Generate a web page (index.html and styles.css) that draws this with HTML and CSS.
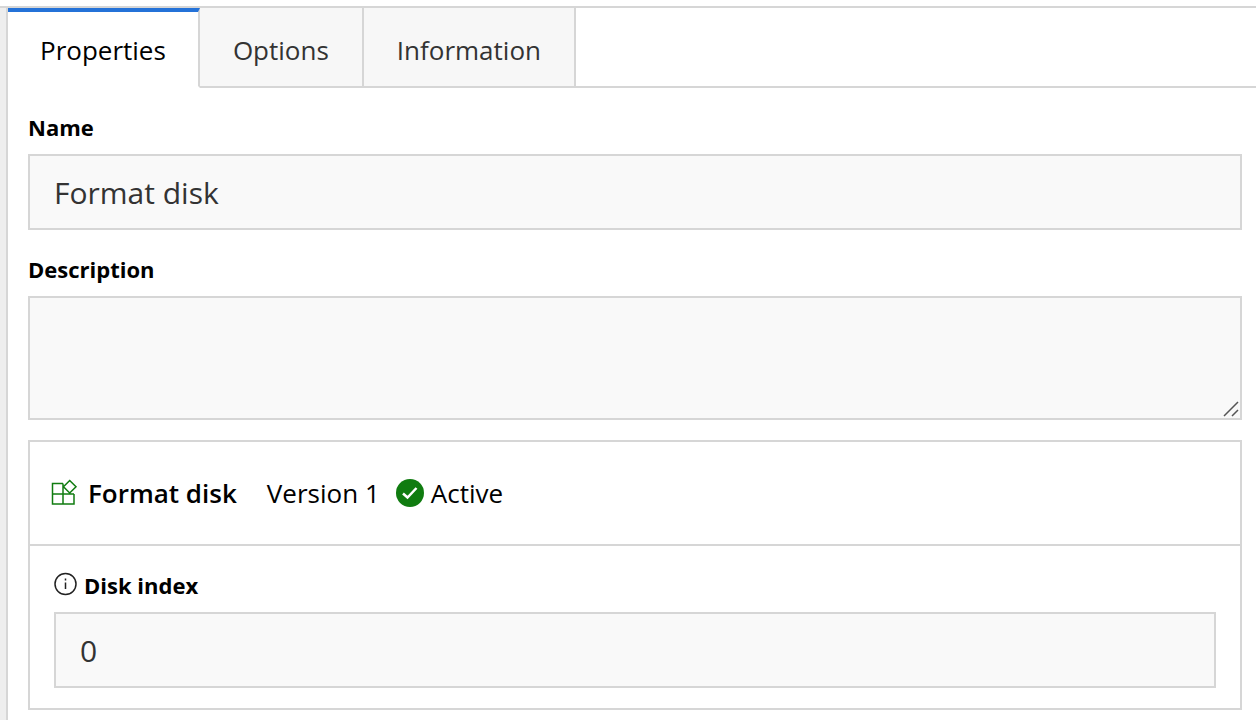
FILE: index.html
```
<!DOCTYPE html>
<html lang="en">
<head>
    <meta charset="UTF-8">
    <meta name="viewport" content="width=device-width, initial-scale=1.0">
    <title>Format disk</title>
    <link rel="stylesheet" href="styles.css">
</head>
<body>
    <main class="panel">
        <div class="tabs" role="tablist">
            <button class="tab active" type="button" role="tab" aria-selected="true">Properties</button>
            <button class="tab" type="button" role="tab" aria-selected="false">Options</button>
            <button class="tab" type="button" role="tab" aria-selected="false">Information</button>
        </div>

        <form class="content">
            <label class="label" for="name">Name</label>
            <input class="field" id="name" type="text" value="Format disk">

            <label class="label" for="description">Description</label>
            <div class="textarea-wrap">
                <textarea class="field area" id="description"></textarea>
                <svg class="grip" viewBox="0 0 16 16">
                    <path d="M1 15L15 1M9 15L15 9"/>
                </svg>
            </div>

            <section class="card">
                <div class="card-header">
                    <svg class="icon-blocks" viewBox="0 0 28 28">
                        <path d="M13 4.5H2.5V25H24V15M2.5 15H24M13 4.500V25M19.700 1.500L26 7.800L19.700 14L13.500 7.800Z"/>
                    </svg>
                    <span class="card-title">Format disk</span>
                    <span class="version">Version 1</span>
                    <svg class="icon-check" viewBox="0 0 28 28">
                        <circle cx="14" cy="14" r="14"/>
                        <path d="M7 14.500L11.500 18.500L20.500 9"/>
                    </svg>
                    <span>Active</span>
                </div>
                <div class="card-body">
                    <label class="label" for="disk-index">
                        <svg class="icon-info" viewBox="0 0 24 24">
                            <circle cx="11.500" cy="11" r="10.500"/>
                            <path d="M11.500 9.500V16M11.500 5.500V7.500"/>
                        </svg>
                        Disk index
                    </label>
                    <input class="field" id="disk-index" type="text" value="0">
                </div>
            </section>
        </form>
    </main>
</body>
</html>
```

FILE: styles.css
```
* {
    box-sizing: border-box;
}

body {
    margin: 0;
    padding-top: 6px;
    min-height: 100vh;
    display: flex;
    background: #fff;
    color: #000;
    font-family: 'Open Sans', 'Noto Sans', sans-serif;
    font-size: 26px;
}

/* grey gutter on the left of the panel */
body::before {
    content: '';
    width: 6px;
    border-top: 2px solid #d6d6d6;
    background: #eee;
}

.panel {
    flex: 1;
    min-width: 0;
    border-top: 2px solid #d6d6d6;
    border-left: 2px solid #d6d6d6;
}

.tabs {
    display: flex;
    height: 80px;
}

.tabs::after {
    content: '';
    flex: 1;
    border-bottom: 2px solid #d6d6d6;
}

.tab {
    padding: 6px 33px 0;
    border: 0;
    border-right: 2px solid #d6d6d6;
    border-bottom: 2px solid #d6d6d6;
    background: #f7f7f7;
    color: #333;
    font: inherit;
}

.tab.active {
    border-top: 4px solid #2472d8;
    border-bottom-color: #fff;
    padding: 2px 32px 0;
    background: #fff;
    color: #000;
}

.content {
    padding: 23px 14px 10px 20px;
}

.label {
    display: flex;
    align-items: center;
    gap: 6px;
    height: 32px;
    margin-bottom: 11px;
    font-size: 22px;
    font-weight: 700;
}

.field {
    display: block;
    width: 100%;
    height: 76px;
    margin: 0 0 23px;
    padding: 0 24px;
    border: 2px solid #d6d6d6;
    border-radius: 0;
    background: #f9f9f9;
    color: #333;
    font-family: inherit;
    font-size: 30px;
}

.textarea-wrap {
    position: relative;
}

.area {
    height: 124px;
    margin-bottom: 20px;
    resize: none;
}

.grip {
    position: absolute;
    right: 3px;
    bottom: 3px;
    width: 16px;
    height: 16px;
    fill: none;
    stroke: #555;
    stroke-width: 1.5;
}

.card {
    border: 2px solid #d6d6d6;
}

.card-header {
    display: flex;
    align-items: center;
    height: 104px;
    padding: 0 20px;
    border-bottom: 2px solid #d6d6d6;
}

.card-title {
    margin: 0 30px 0 10px;
    font-weight: 600;
}

.version {
    margin-right: 16px;
}

.icon-blocks {
    width: 28px;
    height: 28px;
    fill: none;
    stroke: #107c10;
    stroke-width: 1.5;
}

.icon-check {
    width: 28px;
    height: 28px;
    margin-right: 7px;
    fill: #107c10;
}

.icon-check path {
    fill: none;
    stroke: #fff;
    stroke-width: 2.5;
}

.icon-info {
    width: 24px;
    height: 24px;
    fill: none;
    stroke: #222;
    stroke-width: 1.5;
    overflow: visible;
}

.card-body {
    padding: 23px 24px 20px;
}

.card-body .field {
    margin-bottom: 0;
}
```
